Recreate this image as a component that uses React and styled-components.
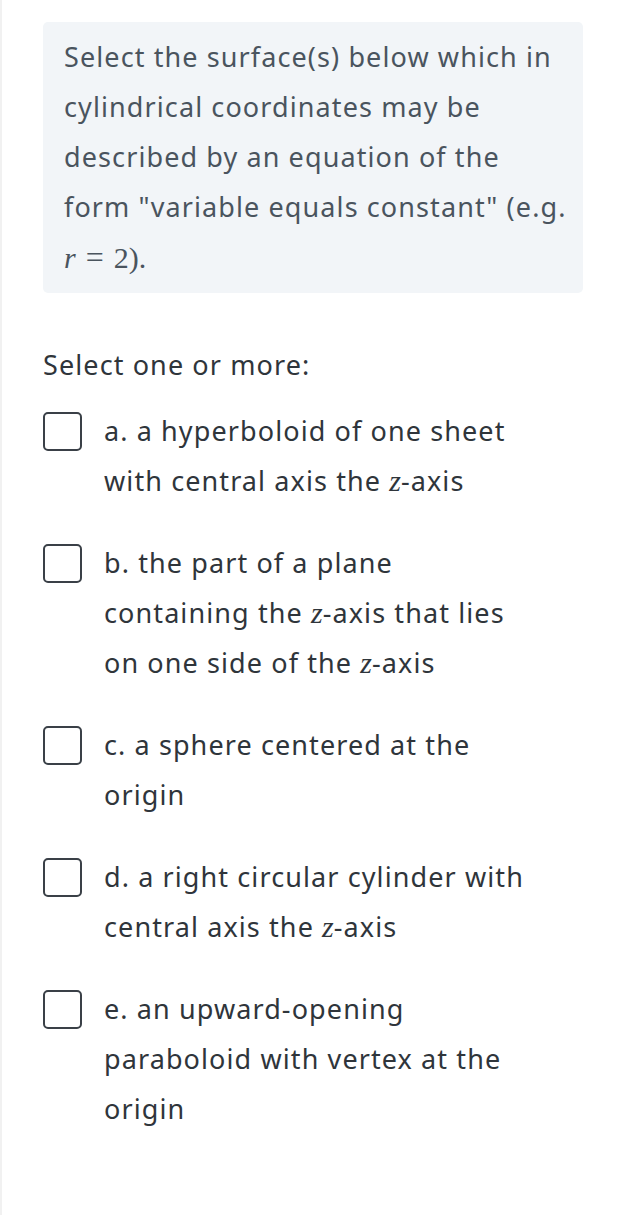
import styled, { createGlobalStyle } from "styled-components";

const GlobalStyle = createGlobalStyle`
  html, body {
    margin: 0;
    padding: 0;
    background: #ffffff;
  }
  body {
    font-family: "Noto Sans", "Open Sans", sans-serif;
  }
`;

const Page = styled.div`
  min-height: 1215px;
  box-sizing: border-box;
  border-left: 2px solid #f1f1f1;
  padding: 22px 37px 0 41px;
`;

const QuestionBox = styled.div`
  background-color: #f2f5f8;
  border-radius: 5px;
  padding: 10px 21px;
  font-size: 27px;
  letter-spacing: 1.1px;
  line-height: 50px;
  white-space: nowrap;
  color: #4a545e;
`;

const Math = styled.span`
  font-family: "Liberation Serif", "Times New Roman", serif;
  font-size: 30px;
  letter-spacing: 0;
  font-style: ${(props) => (props.italic ? "italic" : "normal")};
`;

const Eq = styled.span`
  margin: 0 10px;
  font-size: 32px;
`;

const Prompt = styled.div`
  margin-top: 47px;
  font-size: 27px;
  letter-spacing: 1.1px;
  line-height: 50px;
  color: #2f353b;
`;

const OptionList = styled.div`
  display: flex;
  flex-direction: column;
  gap: 32px;
  margin-top: 16px;
`;

const Option = styled.label`
  display: flex;
  align-items: flex-start;
  gap: 22px;
`;

const Box = styled.span`
  flex: none;
  width: 35px;
  height: 35px;
  margin-top: 6px;
  border: 2px solid #3a4047;
  border-radius: 5px;
  background: #ffffff;
`;

const OptionText = styled.div`
  font-size: 27px;
  letter-spacing: 1.1px;
  line-height: 50px;
  white-space: nowrap;
  color: #2f353b;
`;

const Z = () => <Math italic>z</Math>;

const options = [
  ["a. a hyperboloid of one sheet", <>with central axis the <Z />-axis</>],
  ["b. the part of a plane", <>containing the <Z />-axis that lies</>, <>on one side of the <Z />-axis</>],
  ["c. a sphere centered at the", "origin"],
  ["d. a right circular cylinder with", <>central axis the <Z />-axis</>],
  ["e. an upward-opening", "paraboloid with vertex at the", "origin"],
];

export default function App() {
  return (
    <>
      <GlobalStyle />
      <Page>
        <QuestionBox>
          Select the surface(s) below which in
          <br />
          cylindrical coordinates may be
          <br />
          described by an equation of the
          <br />
          form "variable equals constant" (e.g.
          <br />
          <Math italic>r</Math>
          <Math>
            <Eq>=</Eq>2).
          </Math>
        </QuestionBox>
        <Prompt>Select one or more:</Prompt>
        <OptionList>
          {options.map((lines, i) => (
            <Option key={i}>
              <Box />
              <OptionText>
                {lines.map((line, j) => (
                  <div key={j}>{line}</div>
                ))}
              </OptionText>
            </Option>
          ))}
        </OptionList>
      </Page>
    </>
  );
}
